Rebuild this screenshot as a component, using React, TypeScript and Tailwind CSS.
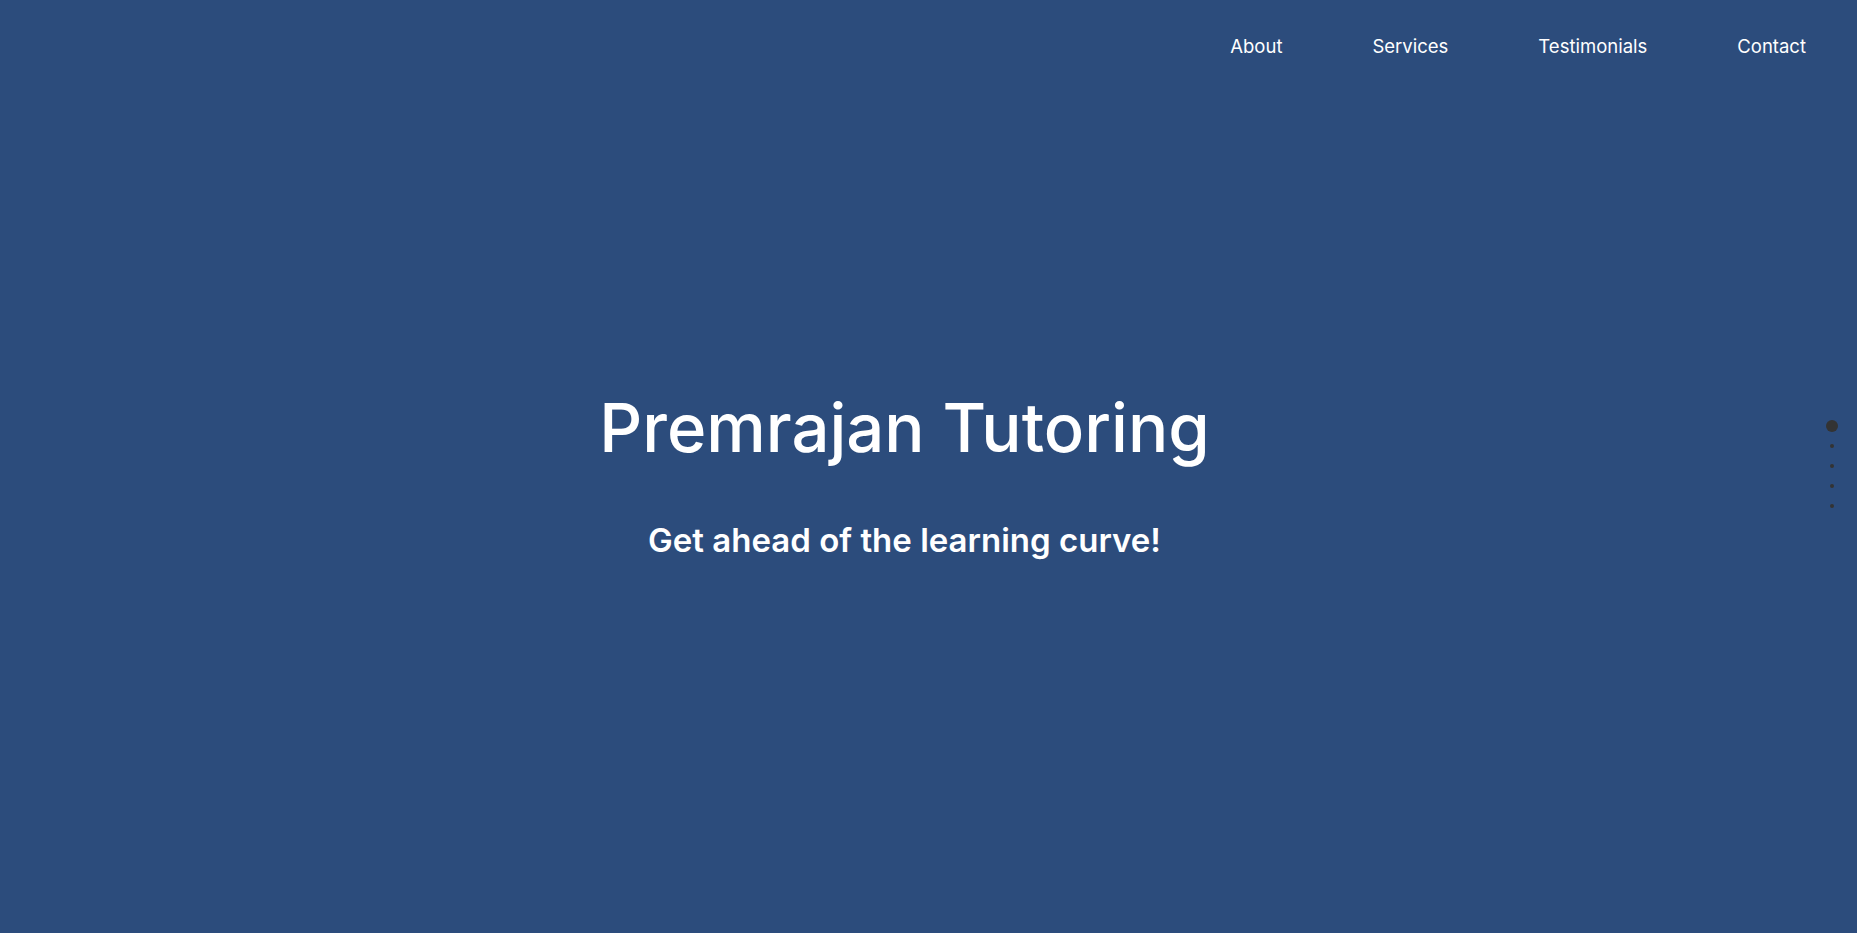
const navLinks = ["About", "Services", "Testimonials", "Contact"];

const SectionDots = () => (
  <div className="fixed right-[19px] top-[420px] flex flex-col items-center">
    <span className="block w-3 h-3 rounded-full bg-[#333333] mb-3" />
    <div className="flex flex-col items-center gap-4">
      {[0, 1, 2, 3].map((i) => (
        <span key={i} className="block w-1 h-1 rounded-full bg-[#333333]" />
      ))}
    </div>
  </div>
);

export default function App() {
  return (
    <div
      className="min-h-screen w-full bg-[#2c4c7c] text-white"
      style={{ fontFamily: "Inter, 'Noto Sans', sans-serif" }}
    >
      <header className="h-[92px] flex items-center justify-end pr-[51px]">
        <nav className="flex items-center gap-[90px]">
          {navLinks.map((link) => (
            <a key={link} href="#" className="text-[18.5px] leading-none">
              {link}
            </a>
          ))}
        </nav>
      </header>

      <main className="h-[841px] flex flex-col items-center pr-[48px] pt-[302px]">
        <h1 className="text-[67px] leading-none font-medium">Premrajan Tutoring</h1>
        <p className="mt-[63px] text-[33px] leading-none font-semibold">
          Get ahead of the learning curve!
        </p>
      </main>

      <SectionDots />
    </div>
  );
}
